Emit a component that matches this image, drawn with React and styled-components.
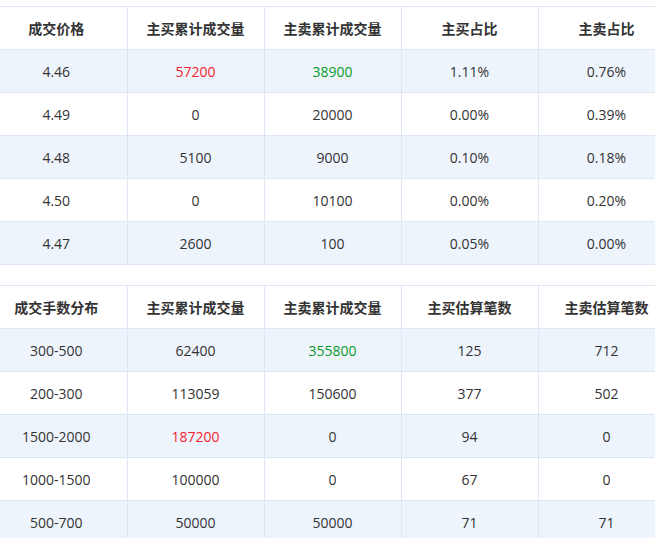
import React from "react";
import styled, { createGlobalStyle } from "styled-components";

const Global = createGlobalStyle`
  body { margin: 0; background: #fff; overflow: hidden; }
`;

const Page = styled.div`
  padding-top: 6px;
  width: 655px;
  overflow: hidden;
  font-family: "Open Sans", "Noto Sans CJK SC", sans-serif;
  font-size: 14px;
  color: #333;
`;

const Table = styled.table`
  border-collapse: collapse;
  table-layout: fixed;
  width: 689px;
  margin: 0 0 20px -14px;
`;

const Th = styled.th`
  height: 42px;
  padding: 0;
  font-weight: bold;
  font-family: "Noto Sans CJK SC", sans-serif;
  font-size: 14px;
  color: #333;
  text-align: center;
  border: 1px solid #dce6f5;
  border-left: ${(p) => (p.$first ? "none" : "1px solid #dce6f5")};
  background: #fff;
`;

const Tr = styled.tr`
  background: ${(p) => (p.$alt ? "#eef4fc" : "#fff")};
`;

const Td = styled.td`
  height: 42px;
  padding: 0;
  text-align: center;
  border: 1px solid #dce6f5;
  border-left: ${(p) => (p.$first ? "none" : "1px solid #dce6f5")};
  color: ${(p) => (p.$tone === "red" ? "#f5222d" : p.$tone === "green" ? "#0a9a2a" : "#333")};
`;

const widths = [141, 137, 137, 137, 137];

const t1 = {
  head: ["成交价格", "主买累计成交量", "主卖累计成交量", "主买占比", "主卖占比"],
  rows: [
    [["4.46"], ["57200", "red"], ["38900", "green"], ["1.11%"], ["0.76%"]],
    [["4.49"], ["0"], ["20000"], ["0.00%"], ["0.39%"]],
    [["4.48"], ["5100"], ["9000"], ["0.10%"], ["0.18%"]],
    [["4.50"], ["0"], ["10100"], ["0.00%"], ["0.20%"]],
    [["4.47"], ["2600"], ["100"], ["0.05%"], ["0.00%"]],
  ],
};

const t2 = {
  head: ["成交手数分布", "主买累计成交量", "主卖累计成交量", "主买估算笔数", "主卖估算笔数"],
  rows: [
    [["300-500"], ["62400"], ["355800", "green"], ["125"], ["712"]],
    [["200-300"], ["113059"], ["150600"], ["377"], ["502"]],
    [["1500-2000"], ["187200", "red"], ["0"], ["94"], ["0"]],
    [["1000-1500"], ["100000"], ["0"], ["67"], ["0"]],
    [["500-700"], ["50000"], ["50000"], ["71"], ["71"]],
  ],
};

const DataTable = ({ data }) => (
  <Table>
    <colgroup>
      {widths.map((w, i) => (
        <col key={i} style={{ width: w }} />
      ))}
    </colgroup>
    <thead>
      <tr>
        {data.head.map((h, i) => (
          <Th key={h} $first={i === 0}>{h}</Th>
        ))}
      </tr>
    </thead>
    <tbody>
      {data.rows.map((r, ri) => (
        <Tr key={ri} $alt={ri % 2 === 0}>
          {r.map(([v, tone], ci) => (
            <Td key={ci} $first={ci === 0} $tone={tone}>{v}</Td>
          ))}
        </Tr>
      ))}
    </tbody>
  </Table>
);

export default function App() {
  return (
    <Page>
      <Global />
      <DataTable data={t1} />
      <DataTable data={t2} />
    </Page>
  );
}
